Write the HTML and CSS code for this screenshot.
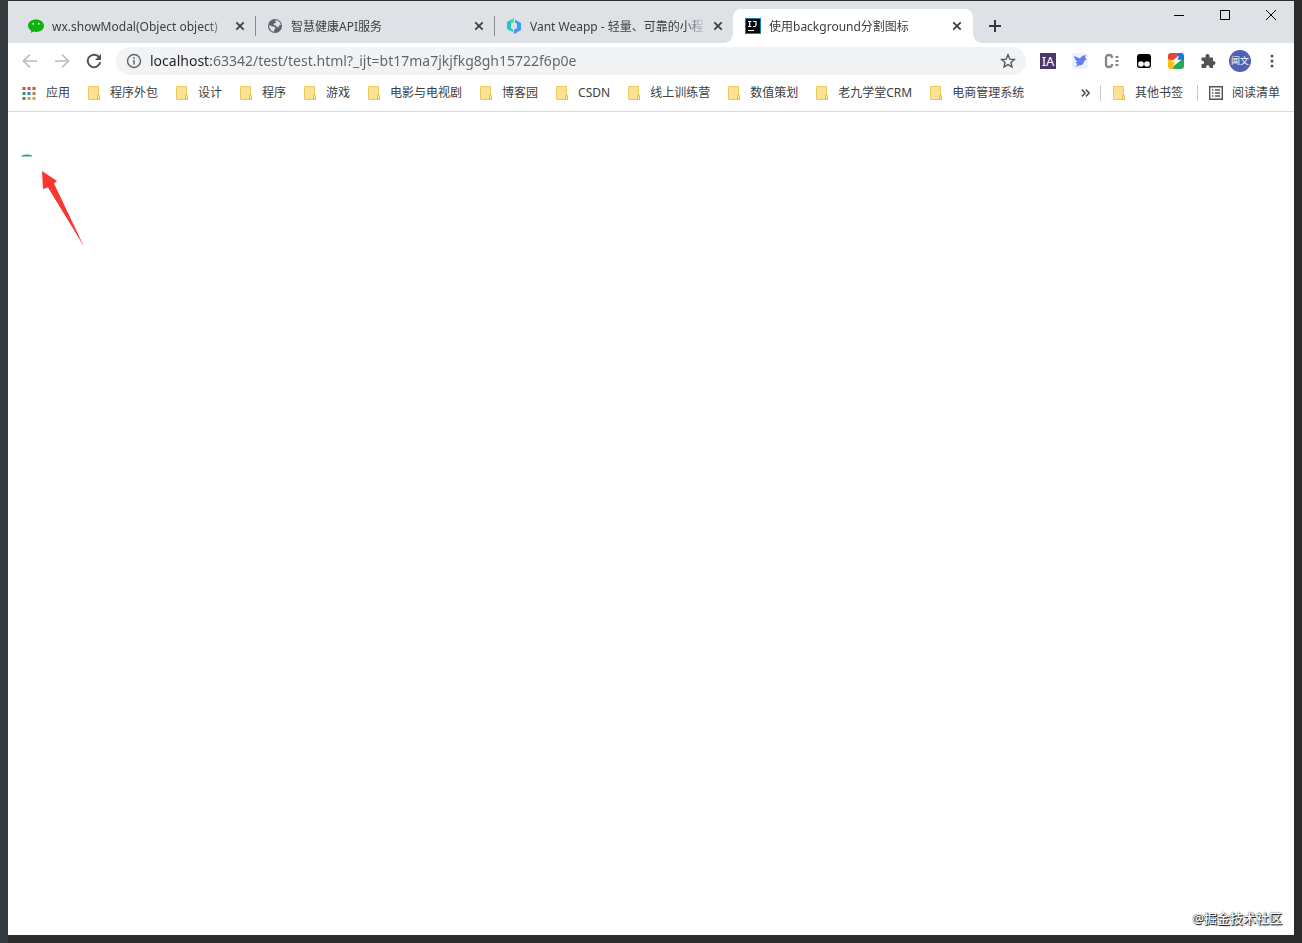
FILE: index.html
```html
<!DOCTYPE html>
<html lang="zh-CN">
<head>
<meta charset="utf-8">
<title>使用background分割图标</title>
<link rel="stylesheet" href="styles.css">
</head>
<body>
<svg class="defs" aria-hidden="true">
  <symbol id="close" viewBox="0 0 16 16"><path d="M4.300 4.300l7.400 7.400M11.700 4.300l-7.400 7.400" fill="none" stroke="#3c4043" stroke-width="1.800"/></symbol>
  <symbol id="folder" viewBox="0 0 12 16"><path d="M.5 1.500h10v9l1 .5v3.500h-11z" fill="#fde293" stroke="#edc85a"/><path d="M9.500 14.500v-3.500l1-1.500 1 1.500v3.500z" fill="#fff0a8" stroke="#e3bb3c"/></symbol>
</svg>
<div class="window">
  <header class="strip">
    <div class="tabs">
      <div class="tab">
        <svg class="favicon" viewBox="0 0 16 16"><path d="M8 1.500c4.500 0 8 2.700 8 6.200s-3.500 6.200-8 6.200c-.8 0-1.600-.1-2.300-.3L2.800 15l.5-2.300C1.300 11.600 0 9.800 0 7.700c0-3.500 3.500-6.200 8-6.200z" fill="#0fb30f"/><circle cx="5.300" cy="5.700" r="1" fill="#d8ffd8"/><circle cx="10.700" cy="5.700" r="1" fill="#d8ffd8"/></svg>
        <button class="title">wx.showModal(Object object)</button>
        <button class="close" aria-label="关闭"><svg><use href="#close"/></svg></button>
      </div>
      <div class="tab divided">
        <svg class="favicon" viewBox="0 0 16 16"><circle cx="8" cy="8" r="7" fill="#5f6368"/><path d="M8.300 2.300c2.700-.2 5 2 5.500 4.600l-1.800.5-.6 2-1.700-.3-.8-1.700-2.300-.3.300-1.500 2-.8-.3-1.200zM2.300 7l2.500 1.200 2.600.5 1.300 1.700-1.400 1.200-.3 2.200C4.300 13.500 2 10.500 2.300 7z" fill="#dee1e6"/></svg>
        <button class="title">智慧健康API服务</button>
        <button class="close" aria-label="关闭"><svg><use href="#close"/></svg></button>
      </div>
      <div class="tab divided">
        <svg class="favicon" viewBox="0 0 16 16"><path d="M8 0v4L5 5.500v4.700L7 11.500v2.700L1 11V4z" fill="#22c9c2"/><path d="M8 0v4L5 5.500V2z" fill="#48e3a5"/><path d="M8 16v-4l3-1.500V5.800L9 4.500V1.800L15 5v7z" fill="#30a2ef"/><path d="M8 16v-4l3-1.500V14z" fill="#5a86ef"/></svg>
        <button class="title">Vant Weapp - 轻量、可靠的小程</button>
        <button class="close" aria-label="关闭"><svg><use href="#close"/></svg></button>
      </div>
      <div class="tab active">
        <svg class="favicon" viewBox="0 0 16 16"><path d="M0 0h16v16H0z" fill="#187fb8"/><path d="M1 1h14v14H1z" fill="#080808"/><path d="M3 3.500h3.400M4.700 3.500v5M3 8.500h3.400M8 3.500h3V7q0 1.500-1.500 1.500H8M3 12.500h6" fill="none" stroke="#fff" stroke-width="1.200"/></svg>
        <button class="title">使用background分割图标</button>
        <button class="close" aria-label="关闭"><svg><use href="#close"/></svg></button>
      </div>
      <button class="newtab" aria-label="新标签页"><svg viewBox="0 0 16 16"><path d="M8 2v12M2 8h12" stroke="#35383c" stroke-width="2"/></svg></button>
    </div>
    <div class="controls">
      <button aria-label="最小化"><svg viewBox="0 0 12 12"><path d="M1 6.500h10" stroke="#000"/></svg></button>
      <button aria-label="最大化"><svg viewBox="0 0 12 12"><path d="M1.500 1.500h9v9h-9z" fill="none" stroke="#000"/></svg></button>
      <button aria-label="关闭窗口"><svg viewBox="0 0 12 12"><path d="M1 1l10 10M11 1L1 11" stroke="#000"/></svg></button>
    </div>
  </header>
  <nav class="toolbar">
    <button class="tool" aria-label="后退"><svg viewBox="0 0 16 16"><path d="M15 8H2M8 1.500L1.500 8 8 14.500" fill="none" stroke="#b9bbbe" stroke-width="1.700"/></svg></button>
    <button class="tool" aria-label="前进"><svg viewBox="0 0 16 16"><path d="M1 8h13M8 1.500L14.500 8 8 14.500" fill="none" stroke="#b9bbbe" stroke-width="1.700"/></svg></button>
    <button class="tool" aria-label="刷新"><svg viewBox="0 0 16 16"><path d="M13.200 4.300A6.300 6.300 0 1 0 14.200 9.300" fill="none" stroke="#505357" stroke-width="2"/><path d="M15 1v6H9z" fill="#505357"/></svg></button>
    <div class="omnibox">
      <svg viewBox="0 0 16 16"><circle cx="8" cy="8" r="6.500" fill="none" stroke="#5f6368" stroke-width="1.400"/><path d="M8 7v4.500M8 4.300v1.600" stroke="#5f6368" stroke-width="1.500"/></svg>
      <input type="text" aria-label="地址" value="localhost:63342/test/test.html?_ijt=bt17ma7jkjfkg8gh15722f6p0e">
      <button aria-label="收藏"><svg viewBox="0 0 16 16"><path d="M8 1.800l1.800 4.300 4.600.4-3.500 3 1.100 4.500-4-2.400L4 14l1.100-4.500-3.500-3 4.600-.4z" fill="none" stroke="#505357" stroke-width="1.300"/></svg></button>
    </div>
    <button class="tool ext-ia" aria-label="IA"><span>IA</span></button>
    <button class="tool" aria-label="飞鸟"><svg viewBox="0 0 16 16"><rect width="16" height="16" rx="2" fill="#edf0ff"/><path d="M2 3l6 2.500C9 3.500 11 2.300 14 2c-.7 1-.8 2-.5 3l1 2-2 .5c-.3 3-2.500 5-5.500 5L3.500 14l2-3L3 9.500l2.500-.7C3.500 7.500 2.300 5.500 2 3z" fill="#667fe8"/></svg></button>
    <button class="tool" aria-label="C"><svg viewBox="0 0 16 16"><path d="M8 5V4.500Q8 2 5 2T2 4.500v7Q2 14 5 14t3-2.500V11" fill="none" stroke="#85878a" stroke-width="2.300"/><path d="M11.500 4h3M11.500 8h3M11.500 12h3" stroke="#85878a" stroke-width="2"/></svg></button>
    <button class="tool" aria-label="脚本"><svg viewBox="0 0 16 16"><rect x="1" y="1" width="14" height="14" rx="3" fill="#000"/><circle cx="5" cy="11" r="2.800" fill="#fff"/><circle cx="11" cy="11" r="2.800" fill="#fff"/></svg></button>
    <button class="tool" aria-label="闪电"><svg viewBox="0 0 16 16"><path d="M8 8V0h5q3 0 3 3v5z" fill="#1675df"/><path d="M8 8L0 9V3q0-3 3-3h7z" fill="#e74335"/><path d="M0 6l8 2-2 8H3q-3 0-3-3z" fill="#fbbd13"/><path d="M8 7h8v6q0 3-3 3H5z" fill="#25a957"/><path d="M11 2.500L3 8.800h4L5 13.500l8.500-6.800h-4z" fill="#fff"/></svg></button>
    <button class="tool" aria-label="扩展程序"><svg viewBox="0 0 16 16"><path d="M1.500 4.500h4V3a2 2 0 0 1 4 0v1.500H13V8h.5a2 2 0 0 1 0 4H13v3H9.500v-1a1.700 1.700 0 0 0-3.400 0v1H1.500v-4h1a1.600 1.600 0 0 0 0-3.200h-1z" fill="#505357"/></svg></button>
    <button class="tool" aria-label="闻文"><span class="avatar">闻文</span></button>
    <button class="tool" aria-label="菜单"><svg viewBox="0 0 16 16"><g fill="#505357"><circle cx="8" cy="3" r="1.500"/><circle cx="8" cy="8" r="1.500"/><circle cx="8" cy="13" r="1.500"/></g></svg></button>
  </nav>
  <nav class="bookmarks">
    <a href="#"><svg class="apps" viewBox="0 0 13 13"><path d="M0 0h3v3H0zM5 0h3v3H5zM10 0h3v3h-3z" fill="#d94a45"/><path d="M0 5h3v3H0z" fill="#3c8f67"/><path d="M5 5h3v3H5z" fill="#2c86c5"/><path d="M10 5h3v3h-3z" fill="#c27c48"/><path d="M0 10h3v3H0z" fill="#4f8b4a"/><path d="M5 10h3v3H5zM10 10h3v3h-3z" fill="#d3a334"/></svg>应用</a>
    <a href="#"><svg><use href="#folder"/></svg>程序外包</a>
    <a href="#"><svg><use href="#folder"/></svg>设计</a>
    <a href="#"><svg><use href="#folder"/></svg>程序</a>
    <a href="#"><svg><use href="#folder"/></svg>游戏</a>
    <a href="#"><svg><use href="#folder"/></svg>电影与电视剧</a>
    <a href="#"><svg><use href="#folder"/></svg>博客园</a>
    <a href="#"><svg><use href="#folder"/></svg>CSDN</a>
    <a href="#"><svg><use href="#folder"/></svg>线上训练营</a>
    <a href="#"><svg><use href="#folder"/></svg>数值策划</a>
    <a href="#"><svg><use href="#folder"/></svg>老九学堂CRM</a>
    <a href="#"><svg><use href="#folder"/></svg>电商管理系统</a>
    <div class="more">
      <button aria-label="更多书签"><svg viewBox="0 0 8 8"><path d="M.7 1l3 3-3 3M4.300 1l3 3-3 3" fill="none" stroke="#505357" stroke-width="1.400"/></svg></button>
      <a href="#"><svg><use href="#folder"/></svg>其他书签</a>
      <a class="reading" href="#"><svg viewBox="0 0 14 14"><path d="M.7.700h12.600v12.600H.7z" fill="none" stroke="#505357" stroke-width="1.400"/><path d="M3 4h1.500M3 7h1.500M3 10h1.500M6 4h5M6 7h5M6 10h5" stroke="#505357" stroke-width="1.300"/></svg>阅读清单</a>
    </div>
  </nav>
  <main class="page">
    <svg class="sprite" viewBox="0 0 11 3"><path d="M0 2.500Q1 .5 6 .5q3 0 5 1v1z" fill="#1aa594"/></svg>
    <svg class="arrow" viewBox="0 0 43 76"><path d="M0 0l15 10-3 2.500L42 75.500 6 16.500 1 18z" fill="#fa3532"/></svg>
    <span class="watermark">@掘金技术社区</span>
  </main>
</div>
</body>
</html>
```
FILE: styles.css
```css
* {
  box-sizing: border-box;
}

body {
  display: flex;
  min-height: 100vh;
  margin: 0;
  padding: 1px 8px 8px;
  background: linear-gradient(90deg, #34393d 8px, #2b2b2b 8px);
  color: #3c4043;
  font: 12px/16px "Noto Sans", "Noto Sans CJK SC", sans-serif;
}

button {
  display: flex;
  align-items: center;
  justify-content: center;
  padding: 0;
  border: 0;
  background: none;
  color: inherit;
  font: inherit;
}

svg {
  flex: none;
  width: 16px;
  height: 16px;
}

.defs {
  position: absolute;
  width: 0;
  height: 0;
}

.window {
  display: flex;
  flex: 1;
  flex-direction: column;
  min-width: 0;
  background: #fff;
}

.strip {
  display: flex;
  height: 42px;
  padding-left: 8px;
  background: #dee1e6;
}

.tabs {
  display: flex;
  flex: 1;
  align-items: flex-end;
  min-width: 0;
}

.tab {
  display: flex;
  flex: 0 1 239px;
  align-items: center;
  min-width: 0;
  height: 34px;
  padding: 0 7px 0 12px;
}

.tab.divided {
  background: linear-gradient(#85888d, #85888d) left center / 1px 20px no-repeat;
}

.tab.active {
  position: relative;
  flex-basis: 240px;
  padding-right: 8px;
  border-radius: 8px 8px 0 0;
  background: #fff;
}

.tab.active::before,
.tab.active::after {
  position: absolute;
  bottom: 0;
  width: 8px;
  height: 8px;
  content: "";
}

.tab.active::before {
  right: 100%;
  background: radial-gradient(circle at 0 0, #dee1e6 7px, #fff 8px);
}

.tab.active::after {
  left: 100%;
  background: radial-gradient(circle at 100% 0, #dee1e6 7px, #fff 8px);
}

.title {
  flex: 1;
  justify-content: flex-start;
  min-width: 0;
  margin-left: 8px;
  padding-top: 2px;
  overflow: hidden;
  text-align: left;
  white-space: nowrap;
  mask-image: linear-gradient(90deg, #000 calc(100% - 20px), transparent);
}

.close {
  margin-left: 4px;
}

.newtab {
  width: 28px;
  height: 34px;
  margin-left: 8px;
}

.controls {
  display: flex;
}

.controls button {
  width: 46px;
  height: 28px;
}

.controls svg {
  width: 12px;
  height: 12px;
}

.toolbar {
  display: flex;
  align-items: center;
  height: 36px;
  padding: 0 6px;
}

.tool {
  flex: none;
  width: 32px;
  height: 32px;
}

.omnibox {
  display: flex;
  flex: 1;
  align-items: center;
  height: 28px;
  margin: 0 6px;
  padding: 0 10px;
  border-radius: 14px;
  background: #f1f3f4;
}

.omnibox input {
  flex: 1;
  min-width: 0;
  height: 24px;
  margin: 0 8px;
  padding: 0;
  border: 0;
  outline: 0;
  background: linear-gradient(90deg, #202124 61px, #5f6368 61px);
  background-clip: text;
  color: transparent;
  font: 14px/24px "Noto Sans", "Noto Sans CJK SC", sans-serif;
}

.ext-ia span {
  width: 16px;
  height: 16px;
  background: #4a386c;
  color: #fff;
  font-size: 13px;
}

.avatar {
  width: 22px;
  height: 22px;
  border-radius: 50%;
  background: #5162b5;
  color: #fff;
  font-size: 9px;
  line-height: 22px;
}

.bookmarks {
  display: flex;
  align-items: center;
  gap: 18px;
  height: 33px;
  padding: 0 14px 4px;
  border-bottom: 1px solid #d9dbde;
  white-space: nowrap;
}

.bookmarks a {
  display: flex;
  align-items: center;
  gap: 10px;
  color: inherit;
  text-decoration: none;
}

.bookmarks svg {
  width: 12px;
}

.bookmarks .apps {
  width: 14px;
  height: 13px;
}

.more {
  display: flex;
  gap: 10px;
  margin-left: auto;
}

.more button svg {
  width: 9px;
}

.more a {
  padding-left: 12px;
  border-left: 1px solid #c8cacd;
}

.more .reading {
  margin-left: 4px;
  padding-left: 11px;
  gap: 9px;
}

.more .reading svg {
  width: 14px;
  height: 14px;
}

.page {
  position: relative;
  flex: 1;
  padding: 42px 13px;
}

.sprite {
  display: block;
  width: 11px;
  height: 3px;
}

.arrow {
  position: absolute;
  top: 59px;
  left: 34px;
  width: 43px;
  height: 76px;
}

.watermark {
  position: absolute;
  right: 12px;
  bottom: 8px;
  color: #fff;
  font-size: 13px;
  font-weight: 500;
  line-height: 18px;
  text-shadow: 1px 1px 1px #000, 0 0 1px #000;
}
```
